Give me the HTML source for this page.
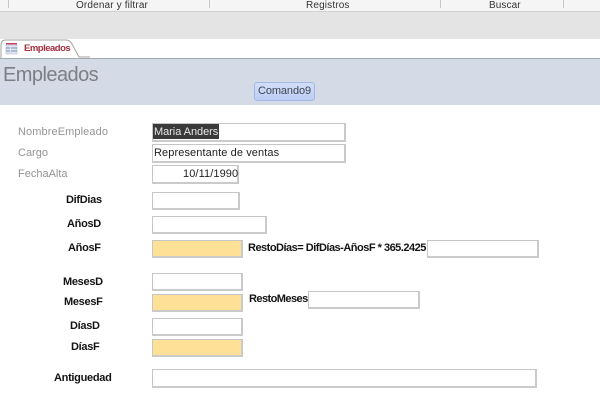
<!DOCTYPE html>
<html lang="es">
<head>
<meta charset="utf-8">
<style>
html,body{margin:0;padding:0;width:600px;height:420px;overflow:hidden;background:#fff;font-family:"Liberation Sans",sans-serif}
div{position:absolute;box-sizing:border-box;white-space:nowrap}
.box{background:#fff;border:1px solid #c6c6c6;border-right:2px solid #cacaca;border-bottom:2px solid #cacaca}
.y{background:#fee197}
.t{font-size:11px;line-height:14px;color:#222}
.g{font-size:11px;line-height:14px;color:#949494}
.b{font-size:11px;line-height:14px;font-weight:bold;color:#141414;letter-spacing:-.3px}
.r{font-size:10px;line-height:12px;color:#333;top:0}
.s{top:0;width:1px;height:8px;background:#c8c8c8}
</style>
</head>
<body>
<div style="left:0;top:0;width:600px;height:12px;background:#f5f5f5;border-bottom:1px solid #d2d2d2"></div>
<div class="s" style="left:8px"></div>
<div class="s" style="left:209px"></div>
<div class="s" style="left:440px"></div>
<div class="s" style="left:563px"></div>
<div class="r" style="left:76px;letter-spacing:.15px">Ordenar y filtrar</div>
<div class="r" style="left:306px;letter-spacing:.15px">Registros</div>
<div class="r" style="left:489px;letter-spacing:.1px">Buscar</div>
<div style="left:0;top:12px;width:600px;height:27px;background:#e4e4e4"></div>

<svg style="position:absolute;left:0;top:39px" width="90" height="21" viewBox="0 0 90 21">
<path d="M1 19 V6 Q1 1 6 1 H66 Q70 1 72 5 L79 18 H90" fill="#fff" stroke="#a6a29c" stroke-width="1"/>
<rect x="6" y="4" width="11" height="1.5" fill="#c8406a"/>
<rect x="6" y="6" width="11" height="9" fill="#dfe6f2" stroke="#a9b4c8" stroke-width=".5"/>
<path d="M6 9h4M6 12h4M11 9h6M11 12h6" stroke="#7d8db0" stroke-width="1"/>
</svg>
<div style="left:24px;top:42px;font-size:9.5px;line-height:14px;font-weight:bold;color:#a5303f;letter-spacing:-.5px">Empleados</div>

<div style="left:0;top:58px;width:600px;height:47px;background:#d5dbe6;border-top:1px solid #a4abb8"></div>
<div style="left:3px;top:63px;font-size:20px;line-height:24px;color:#7d7f85;letter-spacing:-.55px">Empleados</div>
<div style="left:254px;top:82px;width:61px;height:19px;background:linear-gradient(#d3def8,#bccdf4);border:1px solid #a4b8e4;border-radius:3px;font-size:11px;line-height:17px;text-align:center;color:#3e4652;letter-spacing:-.1px">Comando9</div>

<div class="g" style="left:18px;top:125px;letter-spacing:.1px">NombreEmpleado</div>
<div class="g" style="left:18px;top:146px">Cargo</div>
<div class="g" style="left:18px;top:167px">FechaAlta</div>

<div class="box" style="left:152px;top:123px;width:194px;height:19px"></div>
<div style="left:153px;top:124px;width:66px;height:15px;background:#3a3a3a"></div>
<div class="t" style="left:154px;top:125px;color:#e8e8e8;letter-spacing:-.05px">Maria Anders</div>
<div class="box" style="left:152px;top:144px;width:194px;height:19px"></div>
<div class="t" style="left:154px;top:146px;letter-spacing:.1px">Representante de ventas</div>
<div class="box" style="left:152px;top:165px;width:87px;height:19px"></div>
<div class="t" style="left:183px;top:167px;letter-spacing:.1px">10/11/1990</div>

<div class="b" style="left:66px;top:193px">DifDias</div>
<div class="box" style="left:152px;top:192px;width:88px;height:18px"></div>
<div class="b" style="left:67px;top:217px">AñosD</div>
<div class="box" style="left:152px;top:216px;width:115px;height:18px"></div>
<div class="b" style="left:68px;top:241px">AñosF</div>
<div class="box y" style="left:152px;top:240px;width:91px;height:18px"></div>
<div class="b" style="left:248px;top:241px;letter-spacing:-.5px">RestoDías= DifDías-AñosF * 365.2425</div>
<div class="box" style="left:427px;top:240px;width:112px;height:18px"></div>

<div class="b" style="left:63px;top:275px">MesesD</div>
<div class="box" style="left:152px;top:273px;width:91px;height:18px"></div>
<div class="b" style="left:64px;top:295px">MesesF</div>
<div class="box y" style="left:152px;top:294px;width:91px;height:18px"></div>
<div class="b" style="left:249px;top:292px;letter-spacing:-.55px">RestoMeses</div>
<div class="box" style="left:308px;top:291px;width:112px;height:18px"></div>
<div class="b" style="left:70px;top:319px">DíasD</div>
<div class="box" style="left:152px;top:318px;width:91px;height:18px"></div>
<div class="b" style="left:71px;top:340px">DíasF</div>
<div class="box y" style="left:152px;top:339px;width:91px;height:18px"></div>
<div class="b" style="left:54px;top:371px">Antiguedad</div>
<div class="box" style="left:152px;top:369px;width:385px;height:19px"></div>
</body>
</html>
